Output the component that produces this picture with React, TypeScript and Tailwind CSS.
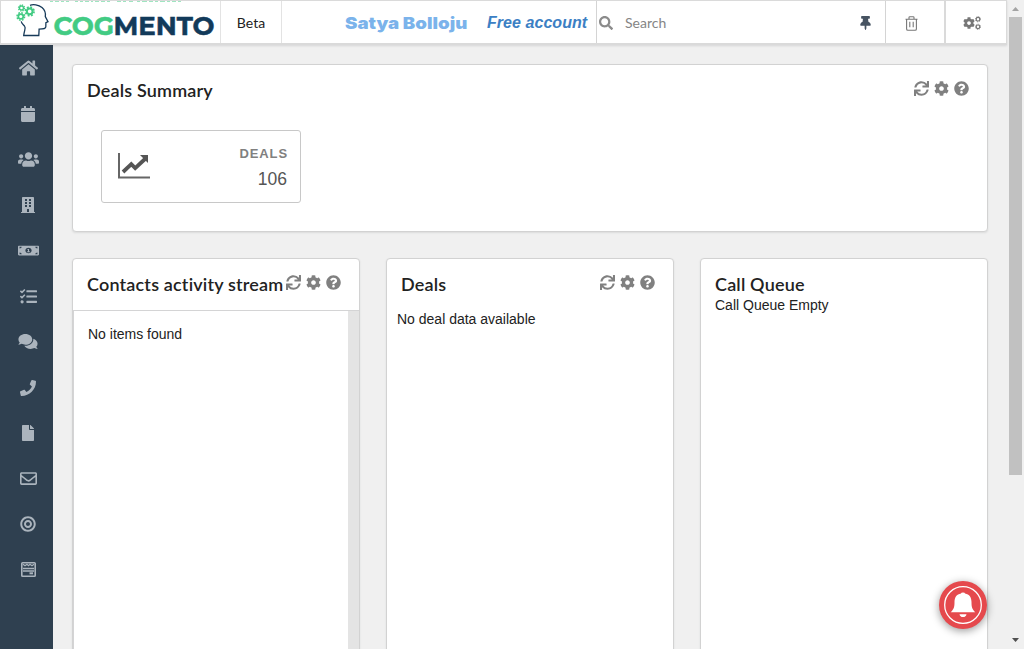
import type { ReactNode } from "react";
import type { IconType } from "react-icons";
import {
  FaBuilding,
  FaBullseye,
  FaCalendar,
  FaCog,
  FaComments,
  FaFile,
  FaHome,
  FaMoneyBillAlt,
  FaPhone,
  FaQuestionCircle,
  FaRegEnvelope,
  FaSearch,
  FaSync,
  FaTasks,
  FaThumbtack,
  FaUsers,
} from "react-icons/fa";

function FormIcon() {
  return (
    <svg width="15" height="15" viewBox="0 0 15 15" fill="none" stroke="currentColor">
      <rect x="0.8" y="0.8" width="13.4" height="13.4" rx="0.8" strokeWidth="1.6" />
      <path d="M2 2.200l2 1.600 2-1.600 1.500 1.400L9 2.200l2 1.600 2-1.600" strokeWidth="1.200" />
      <path d="M2 6.500h11M2 9h11" strokeWidth="1.300" />
      <path d="M8.500 11.300H12" strokeWidth="2" />
    </svg>
  );
}

function Gear({ x, y, r }: { x: number; y: number; r: number }) {
  return (
    <g transform={`translate(${x} ${y}) scale(${r})`} fill="none" stroke="#42cb83">
      <circle r="0.6" strokeWidth="0.42" />
      <circle r="0.92" strokeWidth="0.38" strokeDasharray="0.4 0.3225" />
    </g>
  );
}

function Logo() {
  return (
    <svg width="219" height="43" viewBox="1 1 219 43">
      <path
        d="M50 1h3v1h-3zM55 1h4v1h-4zM61 1h3v1h-3zM66 1h3v1h-3zM75 1h3v1h-3zM80 1h3v1h-3zM85 1h4v1h-4zM91 1h2v1h-2zM95 1h4v1h-4zM101 1h4v1h-4zM107 1h3v1h-3zM117 1h4v1h-4zM123 1h3v1h-3zM129 1h4v1h-4zM137 1h3v1h-3zM142 1h5v1h-5zM149 1h4v1h-4zM155 1h3v1h-3zM160 1h5v1h-5zM167 1h3v1h-3zM172 1h4v1h-4zM178 1h3v1h-3z"
        fill="#42cb83"
        opacity="0.5"
      />
      <Gear x={21.5} y={8} r={3.3} />
      <Gear x={29.7} y={11.4} r={4.7} />
      <Gear x={20.8} y={16.5} r={4.1} />
      <path
        d="M30 5.300c3-1.100 8.500-.7 12 2.200 3.200 2.700 3.700 6.500 3.300 9.100l2.700 5-2.100 1-.1 4.400c-.2 1.600-1.500 1.800-6.700 2.200l-.3 6.300H23.700c.6-5.500 2.400-7.500 1-9.200-1.200-1.600-2.800-2.400-3.500-5"
        fill="none"
        stroke="#173a59"
        strokeWidth="1.300"
      />
      <text
        x="53.500"
        y="35"
        fontFamily="Montserrat, Inter, 'Liberation Sans', sans-serif"
        fontSize="25.800"
        fontWeight="700"
        textLength="60.500"
        lengthAdjust="spacingAndGlyphs"
        fill="#42cb83"
        stroke="#42cb83"
        strokeWidth="0.500"
      >
        COG
      </text>
      <text
        x="113.500"
        y="35"
        fontFamily="Montserrat, Inter, 'Liberation Sans', sans-serif"
        fontSize="25.800"
        fontWeight="700"
        textLength="101"
        lengthAdjust="spacingAndGlyphs"
        fill="#123a5a"
        stroke="#123a5a"
        strokeWidth="0.500"
      >
        MENTO
      </text>
    </svg>
  );
}

function TrashIcon() {
  return (
    <svg width="13" height="15" viewBox="0 0 13 15" fill="none" stroke="#777" strokeWidth="1.100">
      <path d="M.5 3.200h12M4 3V1.500Q4 .7 4.800 .7h3.400Q9 .7 9 1.500V3M1.600 3.300v9.600q0 1.300 1.300 1.300h7.200q1.300 0 1.300-1.300V3.300M4.800 5.700v5.500M8.200 5.700v5.500" />
    </svg>
  );
}

function SettingsIcon() {
  return (
    <div className="flex items-center text-[#777]">
      <FaCog className="size-[12px]" />
      <svg width="6" height="14" viewBox="0 0 6 14" fill="none" stroke="currentColor">
        <circle cx="3" cy="3.200" r="1.800" strokeWidth="1.200" />
        <circle cx="3" cy="3.200" r="2.600" strokeWidth="0.800" strokeDasharray="1.100 0.940" />
        <circle cx="3" cy="10.800" r="1.800" strokeWidth="1.200" />
        <circle cx="3" cy="10.800" r="2.600" strokeWidth="0.800" strokeDasharray="1.100 0.940" />
      </svg>
    </div>
  );
}

function ChartIcon() {
  return (
    <svg width="34" height="28" viewBox="0 0 34 28">
      <path d="M2 1v24.500h31" fill="none" stroke="#666" strokeWidth="2" />
      <path d="M6 20l8.300-7.800 3.900 3.900L28 7" fill="none" stroke="#555" strokeWidth="3.800" />
      <path d="M23 3h8v8z" fill="#555" />
    </svg>
  );
}

const navigation: { icon: IconType; size: string; stretch?: boolean }[] = [
  { icon: FaHome, size: "h-[18px] w-[19px]" },
  { icon: FaCalendar, size: "size-[16px]" },
  { icon: FaUsers, size: "h-[17px] w-[21px]" },
  { icon: FaBuilding, size: "size-[16px]" },
  { icon: FaMoneyBillAlt, size: "h-[13px] w-[21px]", stretch: true },
  { icon: FaTasks, size: "size-[17px]" },
  { icon: FaComments, size: "h-[17px] w-[20px]" },
  { icon: FaPhone, size: "size-[16px]" },
  { icon: FaFile, size: "size-[16px]" },
  { icon: FaRegEnvelope, size: "size-[17px]" },
  { icon: FaBullseye, size: "size-[16px]" },
];

function Tools() {
  return (
    <div className="flex shrink-0 gap-[5px] text-[15px] text-[#808080]">
      <FaSync />
      <FaCog />
      <FaQuestionCircle />
    </div>
  );
}

function Heading({ children }: { children: ReactNode }) {
  return (
    <h2 className="whitespace-nowrap font-['Lato',sans-serif] text-[18px] leading-[26px] font-semibold tracking-[0.18px]">
      {children}
    </h2>
  );
}

function Panel({ title, tools, children }: { title: string; tools?: boolean; children: ReactNode }) {
  return (
    <section className="flex h-[500px] w-[288px] shrink-0 flex-col rounded-[4px] border border-[#d2d2d2] bg-white shadow-[0_1px_2px_rgba(34,36,38,0.1)]">
      <div className="flex h-[51px] shrink-0 justify-between pt-[12px] pr-[18px] pl-[14px]">
        <Heading>{title}</Heading>
        {tools && (
          <div className="-ml-2 pt-[4px]">
            <Tools />
          </div>
        )}
      </div>
      {children}
    </section>
  );
}

export default function App() {
  return (
    <div className="flex h-[649px] w-[1024px] overflow-hidden bg-[#f0f0f0] font-['Liberation_Sans',sans-serif] text-[14px] text-[#222]">
      <div className="flex w-[1007px] flex-col">
        <header className="z-10 flex h-[45px] shrink-0 border border-b-2 border-[#dadada] bg-white shadow-[0_1px_2px_rgba(34,36,38,0.12)]">
          <div className="h-[42px] w-[220px] border-r border-[#e3e3e3]">
            <Logo />
          </div>
          <div className="flex w-[61px] items-center justify-center border-r border-[#e3e3e3] font-['Lato',sans-serif] text-[14px]">
            Beta
          </div>
          <div className="flex flex-1 items-center pl-[63px]">
            <div className="w-[142px] pt-[2px]">
              <span className="block w-max origin-left scale-x-[1.13] whitespace-nowrap font-['Inter',sans-serif] text-[16.500px] leading-[20px] font-black text-[#7bb3eb]">
                Satya Bolloju
              </span>
            </div>
            <span className="whitespace-nowrap pt-px text-[16px] font-bold tracking-[0.050px] text-[#3c80c4] italic">Free account</span>
          </div>
          <div className="flex w-[289px] items-center border-l border-[#d4d4d4] pl-[2px]">
            <FaSearch className="mt-[2px] size-[14px] text-[#8b8b8b]" />
            <span className="pl-[12px] font-['Lato',sans-serif] text-[14px] text-[#858585]">Search</span>
            <FaThumbtack className="mt-px mr-[12px] ml-auto h-[14px] w-[15px] text-[#465361]" />
          </div>
          <div className="flex w-[59px] items-center border-l border-[#d4d4d4] pt-[3px] pl-[19px]">
            <TrashIcon />
          </div>
          <div className="flex w-[62px] items-center border-l-2 border-[#dadada] pt-[2px] pl-[17px]">
            <SettingsIcon />
          </div>
        </header>
        <div className="flex min-h-0 flex-1">
          <nav className="flex w-[53px] shrink-0 flex-col bg-[#2f4050] text-[#abb4bd]">
            {navigation.map(({ icon: Icon, size, stretch }, index) => (
              <div key={index} className="flex h-[45.650px] shrink-0 items-center justify-center pt-[0.400px] pl-[3px]">
                <Icon className={size} preserveAspectRatio={stretch ? "none" : undefined} />
              </div>
            ))}
            <div className="flex h-[45.650px] shrink-0 items-center justify-center pl-[3px]">
              <FormIcon />
            </div>
          </nav>
          <main className="flex flex-1 flex-col gap-[26px] pt-[19px] pl-[19px]">
            <section className="h-[168px] w-[916px] shrink-0 rounded-[4px] border border-[#d2d2d2] bg-white shadow-[0_1px_2px_rgba(34,36,38,0.1)]">
              <div className="flex h-[65px] justify-between pt-[12px] pr-[18px] pl-[14px]">
                <Heading>Deals Summary</Heading>
                <div className="pt-[4px]">
                  <Tools />
                </div>
              </div>
              <div className="ml-[28px] flex h-[73px] w-[200px] justify-between rounded-[3px] border border-[#c8c8c8] pt-[13px] pr-[13px] pl-[15px]">
                <div className="pt-[8px]">
                  <ChartIcon />
                </div>
                <div className="text-right">
                  <div className="-mr-px pt-px text-[13px] leading-[18px] font-bold tracking-[0.900px] text-[#808080]">DEALS</div>
                  <div className="pt-[3px] text-[17.500px] leading-[26px] text-[#555]">106</div>
                </div>
              </div>
            </section>
            <div className="flex gap-[26px]">
              <Panel title="Contacts activity stream" tools>
                <div className="flex flex-1 justify-between border-t border-l border-[#d4d4d5]">
                  <p className="pt-[13px] pl-[14px] leading-[20px]">No items found</p>
                  <div className="w-[11px] bg-[#e4e4e4]" />
                </div>
              </Panel>
              <Panel title="Deals" tools>
                <p className="pl-[10px] leading-[18px]">No deal data available</p>
              </Panel>
              <Panel title="Call Queue">
                <p className="-mt-[14px] pl-[14px] leading-[18px]">Call Queue Empty</p>
              </Panel>
            </div>
          </main>
        </div>
      </div>
      <div className="flex w-[17px] flex-col items-center justify-between bg-[#f0f0f0]">
        <svg width="17" height="17" viewBox="0 0 17 17">
          <path d="M5 11l3.500-4L12 11z" fill="#a3a3a3" />
        </svg>
        <div className="mb-auto h-[458px] w-[13px] bg-[#c1c1c1]" />
        <svg width="17" height="17" viewBox="0 0 17 17">
          <path d="M5 6l3.500 4L12 6z" fill="#505050" />
        </svg>
      </div>
      <button
        aria-label="Notifications"
        className="absolute top-[581px] left-[939px] z-20 flex size-[48px] items-center justify-center rounded-full bg-[#e5494d] shadow-[0_2px_8px_rgba(0,0,0,0.4)]"
      >
        <svg width="48" height="48" viewBox="0 0 48 48">
          <circle cx="24" cy="24" r="18.300" fill="none" stroke="white" strokeWidth="1.300" />
          <path
            d="M22 12.500q0-1 2-1t2 1c4.500.8 6.500 4 6.500 8.500 0 5.500.7 7 3.800 10.300H11.700c3.100-3.300 3.800-4.800 3.800-10.300 0-4.500 2-7.700 6.500-8.500zM20.500 33.200h7q-.5 2.800-3.500 2.800t-3.500-2.800z"
            fill="white"
          />
        </svg>
      </button>
    </div>
  );
}
